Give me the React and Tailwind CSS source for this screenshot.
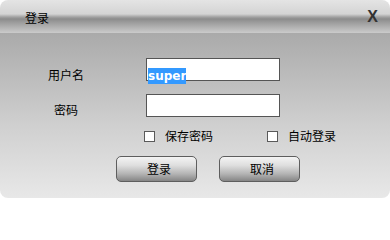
import { useState } from 'react';

const cjk = { fontFamily: '"Noto Sans CJK SC", "Liberation Sans", sans-serif' };

function Check({ label }) {
  const [on, setOn] = useState(false);
  return (
    <label className="flex items-center gap-[10px] cursor-pointer select-none">
      <span
        onClick={() => setOn(v => !v)}
        className="w-[11px] h-[11px] border border-[#5a5a5a] bg-white flex items-center justify-center text-[9px] leading-none"
      >
        {on ? '✓' : ''}
      </span>
      <span className="text-[12px] leading-[12px] text-black">{label}</span>
    </label>
  );
}

function Btn({ children }) {
  return (
    <button className="w-[81px] h-[26px] rounded-[5px] border border-[#5e5e5e] text-[12px] leading-[12px] text-black pl-[5px] bg-[linear-gradient(to_bottom,#f4f4f4_0%,#dedede_35%,#b4b4b4_70%,#858585_100%)]">
      {children}
    </button>
  );
}

export default function App() {
  const [user, setUser] = useState('super');
  const [pwd, setPwd] = useState('');

  return (
    <div className="w-[390px] h-[200px] bg-white" style={cjk}>
      <div className="w-[390px] h-[198px] rounded-[8px] overflow-hidden flex flex-col">
        {/* title bar */}
        <div className="h-[33px] flex items-center justify-between pl-[25px] pr-[12px] bg-[linear-gradient(to_bottom,#e4e4e4_0px,#d4d4d4_14px,#a2a2a2_17px,#8c8c8c_19px,#a8a8a8_25px,#cbcbcb_33px)]">
          <span className="text-[12px] leading-[12px] text-black pt-[3px]">登录</span>
          <span
            className="text-[16px] leading-[16px] font-bold text-[#333]"
            style={{ fontFamily: '"Liberation Sans", sans-serif' }}
          >
            X
          </span>
        </div>

        {/* body */}
        <div className="flex-1 flex flex-col bg-[linear-gradient(to_bottom,#aaaaaa_0%,#cfcfcf_55%,#e8e8e8_100%)]">
          <div className="flex items-end mt-[25px]">
            <div className="w-[52px] ml-[40px] text-center text-[12px] leading-[12px] text-black">用户名</div>
            <div className="ml-[54px] w-[134px] h-[23px] border border-[#555] bg-white pl-[1px] pt-[2px]">
              <span
                className="bg-[#3399ff] text-white font-bold text-[12px] leading-[16px] inline-block"
                style={{ fontFamily: '"DejaVu Sans", sans-serif' }}
              >
                {user}
              </span>
              <input className="hidden" value={user} onChange={e => setUser(e.target.value)} />
            </div>
          </div>

          <div className="flex items-end mt-[13px]">
            <div className="w-[52px] ml-[40px] text-center text-[12px] leading-[12px] text-black pb-[1px]">密码</div>
            <input
              type="password"
              value={pwd}
              onChange={e => setPwd(e.target.value)}
              className="ml-[54px] w-[134px] h-[23px] border border-[#555] bg-white outline-none text-[12px] px-[2px]"
            />
          </div>

          <div className="flex items-center mt-[13px] ml-[144px]">
            <div className="w-[123px]">
              <Check label="保存密码" />
            </div>
            <Check label="自动登录" />
          </div>

          <div className="flex mt-[14px] ml-[116px] gap-[22px]">
            <Btn>登录</Btn>
            <Btn>取消</Btn>
          </div>
        </div>
      </div>
    </div>
  );
}
